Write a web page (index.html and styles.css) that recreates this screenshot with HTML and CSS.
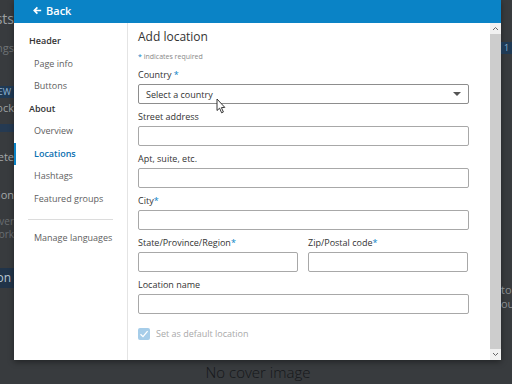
FILE: index.html
```html
<!DOCTYPE html>
<html lang="en">
<head>
  <meta charset="UTF-8">
  <title>Add location</title>
  <link rel="stylesheet" href="styles.css">
</head>
<body>

  <div class="page">

    <!-- Page behind the dialog -->
    <div class="edge edge-left">
      <span class="frag frag-1">Interests</span>
      <span class="frag frag-2">Settings</span>
      <span class="badge badge-new">NEW</span>
      <span class="frag frag-3">Unlock</span>
      <span class="band"></span>
      <span class="frag frag-4">Complete</span>
      <span class="frag frag-5">Action</span>
      <span class="frag frag-6">Discover</span>
      <span class="frag frag-7">Network</span>
      <span class="badge badge-desc">Description</span>
    </div>

    <!-- Dialog -->
    <div class="modal">
      <div class="modal-header">
        <span class="back">
          <svg width="9" height="9" viewBox="0 0 9 9"><path d="M8.2 4.5 H1.6 M4.4 1.4 L1.3 4.5 L4.4 7.6" fill="none" stroke="#fff" stroke-width="1.7"/></svg>
          Back
        </span>
      </div>
      <div class="modal-body">

        <!-- Side navigation -->
        <div class="sidebar">
          <div class="nav-head">Header</div>
          <div class="nav-item">Page info</div>
          <div class="nav-item">Buttons</div>
          <div class="nav-head">About</div>
          <div class="nav-item">Overview</div>
          <div class="nav-item active">Locations</div>
          <div class="nav-item">Hashtags</div>
          <div class="nav-item">Featured groups</div>
          <div class="nav-divider"></div>
          <div class="nav-item">Manage languages</div>
        </div>

        <!-- Form -->
        <div class="form">
          <div class="title">Add location</div>
          <div class="required"><span class="star">*</span> indicates required</div>

          <div class="field">
            <label>Country <span class="star">*</span></label>
            <div class="select">
              <span>Select a country</span>
              <span class="caret"></span>
            </div>
          </div>

          <div class="field">
            <label>Street address</label>
            <div class="input"></div>
          </div>

          <div class="field">
            <label>Apt, suite, etc.</label>
            <div class="input"></div>
          </div>

          <div class="field">
            <label>City<span class="star">*</span></label>
            <div class="input"></div>
          </div>

          <div class="field-row">
            <div class="field">
              <label>State/Province/Region<span class="star">*</span></label>
              <div class="input"></div>
            </div>
            <div class="field">
              <label>Zip/Postal code<span class="star">*</span></label>
              <div class="input"></div>
            </div>
          </div>

          <div class="field">
            <label>Location name</label>
            <div class="input"></div>
          </div>

          <div class="check-row">
            <span class="checkbox">
              <svg width="12" height="12" viewBox="0 0 12 12"><path d="M2.5 6.2 L5 8.6 L9.6 3.2" fill="none" stroke="#fff" stroke-width="1.3"/></svg>
            </span>
            <span class="check-label">Set as default location</span>
          </div>

          <!-- mouse pointer -->
          <svg class="pointer" width="10" height="16" viewBox="0 0 10 16">
            <path d="M1 1 L1 12.5 L3.6 10.2 L5.6 14.8 L7.4 14 L5.4 9.6 L8.8 9.4 Z" fill="#fff" stroke="#222" stroke-width="0.9" stroke-linejoin="round"/>
          </svg>
        </div>

        <!-- Scrollbar -->
        <div class="scrollbar">
          <div class="scroll-btn">
            <svg width="7" height="5" viewBox="0 0 7 5"><path d="M1 4 L3.5 1.5 L6 4" fill="none" stroke="#666" stroke-width="1"/></svg>
          </div>
          <div class="scroll-track"></div>
          <div class="scroll-btn">
            <svg width="7" height="5" viewBox="0 0 7 5"><path d="M1 1 L3.5 3.5 L6 1" fill="none" stroke="#666" stroke-width="1"/></svg>
          </div>
        </div>

      </div>
    </div>

    <div class="edge edge-right">
      <span class="badge badge-r">1</span>
      <span class="frag frag-r1">to</span>
      <span class="frag frag-r2">ou</span>
    </div>

    <div class="cover">No cover image</div>

  </div>

</body>
</html>
```

FILE: styles.css
```css
/* General styling */
body {
  margin: 0;
  padding: 0;
  font-family: 'Open Sans', 'Noto Sans', sans-serif;
  background-color: #383b3e;
  overflow: hidden;
}

.page {
  display: grid;
  grid-template-columns: 14px 487px 11px;
  grid-template-rows: 360px 24px;
  width: 512px;
  height: 384px;
}

/* Background page edges */
.edge {
  display: flex;
  flex-direction: column;
  overflow: hidden;
}

.edge-left {
  align-items: flex-end;
}

.frag {
  font-size: 11px;
  line-height: 12px;
  color: #8a8d90;
  white-space: nowrap;
}

.frag-1 { margin-top: 13px; font-size: 14px; color: #9ea1a3; }
.frag-2 { margin-top: 17px; color: #6f7376; }
.frag-3 { margin-top: 4px; color: #9ea1a3; }
.frag-4 { margin-top: 19px; color: #a4a7a9; }
.frag-5 { margin-top: 26px; color: #a4a7a9; }
.frag-6 { margin-top: 14px; color: #6a6e71; font-size: 10px; }
.frag-7 { margin-top: 1px; color: #6a6e71; font-size: 10px; }

.badge {
  white-space: nowrap;
  font-size: 9px;
  line-height: 12px;
  color: #8fb4d3;
  background-color: #1f3a55;
  padding: 0 3px;
}

.badge-new { margin-top: 32px; }

.band {
  width: 14px;
  height: 8px;
  margin-top: 10px;
  background-color: #253a52;
}

.badge-desc {
  margin-top: 28px;
  font-size: 12px;
  line-height: 20px;
  color: #b8c6d3;
  background-color: #213449;
}

.edge-right {
  align-items: flex-start;
}

.badge-r { margin-top: 42px; }
.frag-r1 { margin-top: 230px; }
.frag-r2 { margin-top: 2px; }

.cover {
  grid-column: 1 / 4;
  text-align: center;
  font-size: 15px;
  line-height: 24px;
  font-weight: 300;
  color: #15171a;
  padding-left: 4px;
}

/* Dialog */
.modal {
  display: flex;
  flex-direction: column;
  background-color: #fff;
  box-shadow: 0 2px 6px rgba(0, 0, 0, 0.4);
}

.modal-header {
  height: 23px;
  background-color: #0a83c6;
  display: flex;
  align-items: center;
  padding-left: 19px;
}

.back {
  color: #fff;
  font-size: 11px;
  font-weight: 600;
  margin-top: -2px;
  display: flex;
  align-items: center;
  gap: 4px;
}

.modal-body {
  flex: 1;
  display: flex;
  position: relative;
}

/* Side navigation */
.sidebar {
  width: 113px;
  border-right: 1px solid #e4e4e4;
  padding-top: 7px;
}

.nav-head,
.nav-item {
  height: 22.5px;
  line-height: 22.5px;
  font-size: 9px;
  white-space: nowrap;
}

.nav-head {
  padding-left: 15px;
  font-weight: 600;
  color: #333;
}

.nav-item {
  padding-left: 20px;
  color: #5e5e5e;
}

.nav-item.active {
  color: #0b70b0;
  box-shadow: inset 2px 0 0 #0a83c6;
  font-weight: 600;
}

.nav-divider {
  height: 1px;
  margin: 9px 14px 7px 14px;
  background-color: #dcdcdc;
}

/* Form */
.form {
  flex: 1;
  padding: 7px 0 0 10px;
  position: relative;
}

.title {
  font-size: 12px;
  line-height: 14px;
  color: #333;
}

.required {
  margin-top: 8px;
  font-size: 7px;
  line-height: 10px;
  color: #888;
}

.star {
  color: #0a83c6;
}

.field {
  display: flex;
  flex-direction: column;
  width: 331px;
  margin-top: 7px;
}

.field label {
  font-size: 9px;
  line-height: 12px;
  color: #333;
  white-space: nowrap;
}

.input,
.select {
  margin-top: 3px;
  height: 18px;
  border: 1px solid #a8a8a8;
  border-radius: 2px;
}

.select {
  border-color: #8d8d8d;
  display: flex;
  align-items: center;
  justify-content: space-between;
  padding: 0 7px 0 7px;
  font-size: 9px;
  color: #333;
}

.caret {
  width: 0;
  height: 0;
  border-left: 4px solid transparent;
  border-right: 4px solid transparent;
  border-top: 4px solid #555;
}

.field-row {
  display: flex;
  gap: 10px;
  width: 331px;
}

.field-row .field {
  width: 160px;
  margin-top: 7px;
}

.field-row + .field {
  margin-top: 7px;
}

.check-row {
  display: flex;
  align-items: center;
  gap: 6px;
  margin-top: 13px;
}

.checkbox {
  width: 12px;
  height: 12px;
  border-radius: 2px;
  background-color: #a6cde9;
  display: flex;
}

.check-label {
  font-size: 9px;
  color: #a9a9a9;
}

.pointer {
  position: absolute;
  left: 88px;
  top: 75px;
}

/* Scrollbar */
.scrollbar {
  width: 11px;
  margin-left: 21px;
  display: flex;
  flex-direction: column;
  background-color: #f1f1f1;
}

.scroll-btn {
  height: 11px;
  display: flex;
  align-items: center;
  justify-content: center;
}

.scroll-track {
  flex: 1;
  background-color: #cdcdcd;
}
```
